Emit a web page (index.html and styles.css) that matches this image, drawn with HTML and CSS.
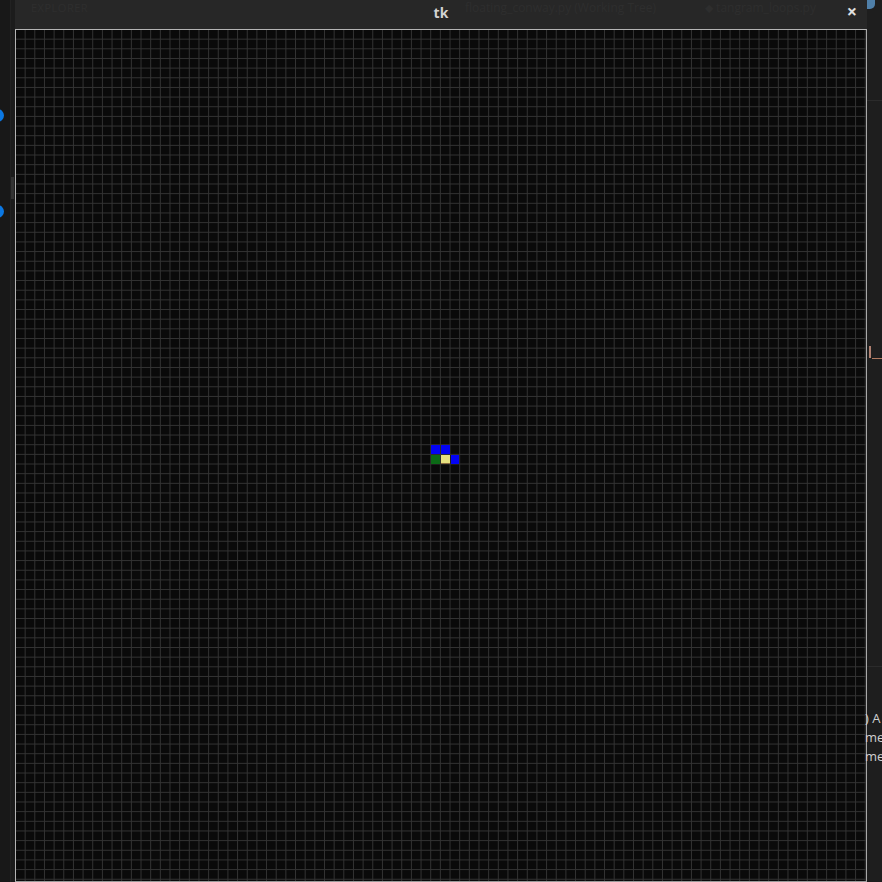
FILE: index.html
```html
<!DOCTYPE html>
<html>
<head>
<meta charset="utf-8">
<title>tk</title>
<link rel="stylesheet" href="styles.css">
</head>
<body>
<div class="desk">
  <div class="side-left">
    <span class="badge b1"></span>
    <span class="thumb"></span>
    <span class="badge b2"></span>
  </div>
  <div class="window">
    <div class="titlebar">
      <span class="ghost g-explorer">EXPLORER</span>
      <span class="title">tk</span>
      <span class="ghost g-file">floating_conway.py (Working Tree)</span>
      <span class="ghost g-file2">⬥ tangram_loops.py</span>
      <span class="close">×</span>
    </div>
    <div class="canvas">
      <div class="cell blue c44 r44"></div>
      <div class="cell blue c45 r44"></div>
      <div class="cell green c44 r45"></div>
      <div class="cell yellow c45 r45"></div>
      <div class="cell blue c46 r45"></div>
    </div>
  </div>
  <div class="side-right">
    <span class="corner-icon"></span>
    <div class="rule r1"></div>
    <div class="copper">
      <span class="cv"></span>
      <span class="ch"></span>
    </div>
    <div class="rule r2"></div>
    <div class="side-text">
      <span>) A</span>
      <span>me</span>
      <span>me</span>
    </div>
  </div>
</div>
</body>
</html>
```

FILE: styles.css
```css
* { box-sizing: border-box; }
html, body {
  margin: 0;
  padding: 0;
  background: #1d1d1d;
  width: 882px;
  height: 882px;
  overflow: hidden;
  font-family: "Open Sans", "DejaVu Sans", sans-serif;
}
.desk {
  display: flex;
  width: 882px;
  height: 882px;
}
.side-left {
  width: 15px;
  flex: none;
  position: relative;
  background: #181818;
  border-right: 5px solid #1c1c1c;
}
.side-left::after {
  content: "";
  position: absolute;
  left: 10px;
  top: 0;
  bottom: 0;
  width: 1px;
  background: #222;
}
.badge {
  position: absolute;
  left: -9px;
  width: 13px;
  height: 13px;
  border-radius: 50%;
  background: #0b78e3;
}
.b1 { top: 109px; }
.b2 { top: 205px; }
.thumb {
  position: absolute;
  left: 10px;
  top: 177px;
  width: 4px;
  height: 22px;
  background: #333;
}
.window {
  width: 852px;
  flex: none;
  display: flex;
  flex-direction: column;
}
.titlebar {
  height: 29px;
  background: #272727;
  position: relative;
  display: flex;
  align-items: center;
  justify-content: center;
}
.title {
  color: #d2d2d2;
  font-weight: 700;
  font-size: 14px;
  margin-top: -4px;
}
.close {
  position: absolute;
  right: 10px;
  top: 1px;
  color: #e0e0e0;
  font-size: 18px;
  font-weight: 700;
  line-height: 20px;
}
.ghost {
  position: absolute;
  color: #2e2e2e;
  font-size: 11px;
  top: 1px;
  line-height: 13px;
  white-space: nowrap;
}
.g-explorer { left: 16px; letter-spacing: 0.5px; }
.g-file { left: 450px; font-size: 12px; }
.g-file2 { left: 690px; font-size: 12px; }
.canvas {
  width: 852px;
  height: 853px;
  border: 1px solid #b4b4b4;
  border-right-color: #a8a8a8;
  border-bottom-color: #9a9a9a;
  background-color: #0a0a0a;
  background-image:
    linear-gradient(to right, #333333 1px, transparent 1px),
    linear-gradient(to bottom, #333333 1px, transparent 1px);
  background-size: 9.659px 9.659px;
  background-origin: border-box;
  background-position: 0 0;
  display: grid;
  grid-template-columns: repeat(88, 9.659px);
  grid-template-rows: repeat(88, 9.659px);
}
.cell {
  width: calc(100% - 1px);
  height: calc(100% - 1px);
}
.blue { background: #0303f4; }
.green { background: #0b6a16; }
.yellow { background: #e6e07f; box-shadow: inset 0 -1px 0 #8a6a40; }
.c44 { grid-column: 44; }
.c45 { grid-column: 45; }
.c46 { grid-column: 46; }
.r44 { grid-row: 44; }
.r45 { grid-row: 45; }
.side-right {
  flex: 1;
  background: #1e1e1e;
  position: relative;
  display: flex;
  flex-direction: column;
}
.corner-icon {
  position: absolute;
  left: 0;
  top: 0;
  width: 8px;
  height: 9px;
  border-radius: 0 0 5px 0;
  background: #4f7fa8;
}
.rule {
  height: 1px;
  background: #2b2b2b;
}
.r1 { margin-top: 100px; }
.copper {
  position: relative;
  height: 320px;
  margin-top: 245px;
}
.copper .cv {
  position: absolute;
  left: 2px;
  top: 0;
  width: 2px;
  height: 12px;
  background: #b08070;
}
.copper .ch {
  position: absolute;
  left: 5px;
  top: 12px;
  width: 12px;
  height: 1px;
  background: #b07a60;
}
.side-text {
  margin-top: 42px;
  display: flex;
  flex-direction: column;
  color: #cfcfcf;
  font-size: 13px;
  line-height: 19px;
  margin-left: -2px;
  white-space: nowrap;
  overflow: hidden;
}
```
